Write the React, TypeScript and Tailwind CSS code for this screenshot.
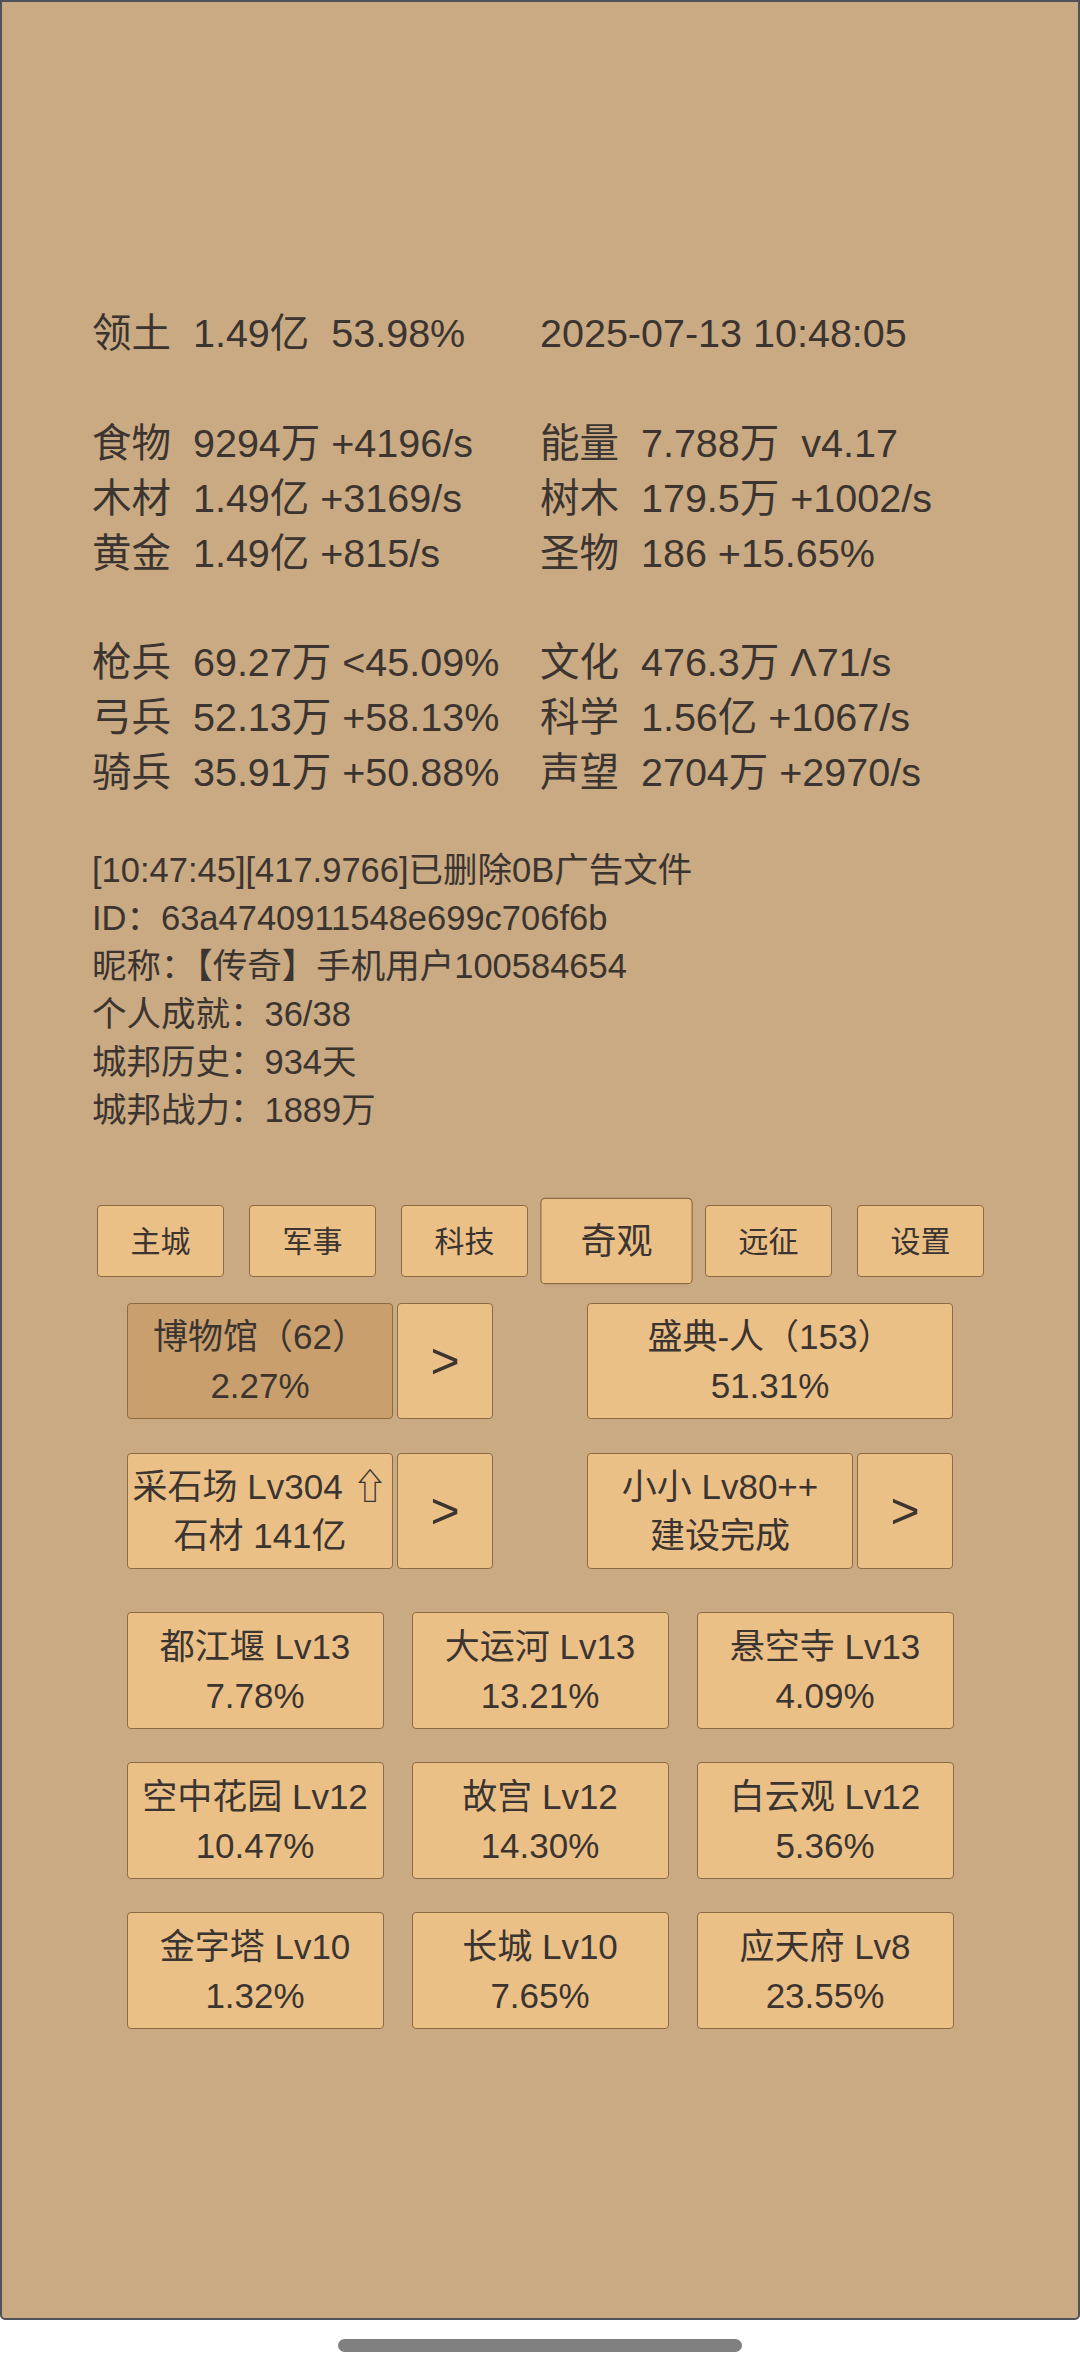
import React from 'react';

const stats: [string, string][] = [
  ['领土  1.49亿  53.98%', '2025-07-13 10:48:05'],
  ['', ''],
  ['食物  9294万 +4196/s', '能量  7.788万  v4.17'],
  ['木材  1.49亿 +3169/s', '树木  179.5万 +1002/s'],
  ['黄金  1.49亿 +815/s', '圣物  186 +15.65%'],
  ['', ''],
  ['枪兵  69.27万 <45.09%', '文化  476.3万 Λ71/s'],
  ['弓兵  52.13万 +58.13%', '科学  1.56亿 +1067/s'],
  ['骑兵  35.91万 +50.88%', '声望  2704万 +2970/s'],
];

const logLines = [
  '[10:47:45][417.9766]已删除0B广告文件',
  'ID：63a4740911548e699c706f6b',
  '昵称：【传奇】手机用户100584654',
  '个人成就：36/38',
  '城邦历史：934天',
  '城邦战力：1889万',
];

const tabs = ['主城', '军事', '科技', '奇观', '远征', '设置'];

const wonders = [
  ['都江堰 Lv13', '7.78%'],
  ['大运河 Lv13', '13.21%'],
  ['悬空寺 Lv13', '4.09%'],
  ['空中花园 Lv12', '10.47%'],
  ['故宫 Lv12', '14.30%'],
  ['白云观 Lv12', '5.36%'],
  ['金字塔 Lv10', '1.32%'],
  ['长城 Lv10', '7.65%'],
  ['应天府 Lv8', '23.55%'],
];

function TwoLine({ top, bottom, dark = false, className = '' }: { top: string; bottom: string; dark?: boolean; className?: string }) {
  return (
    <div
      className={`flex flex-col items-center justify-center rounded-[4px] border border-[#8c6a44] text-[35px] leading-[49px] whitespace-pre ${
        dark ? 'bg-[#c99f6d]' : 'bg-[#eac087]'
      } ${className}`}
    >
      <div>{top}</div>
      <div>{bottom}</div>
    </div>
  );
}

function Arrow() {
  return (
    <div className="flex h-[116px] w-[96px] items-center justify-center rounded-[4px] border border-[#8c6a44] bg-[#eac087] text-[50px] leading-none">
      &gt;
    </div>
  );
}

export default function App() {
  return (
    <div className="min-h-screen bg-white font-['Liberation_Sans','Noto_Sans_CJK_SC',sans-serif] text-[#3b3430]">
      <div className="flex h-[2320px] flex-col rounded-b-[5px] border-2 border-[#50525a] bg-[#c9aa82]">
        {/* Resource stats */}
        <div className="grid grid-cols-[448px_448px] pl-[90px] pt-[304px] text-[39.5px] leading-[54.9px] whitespace-pre">
          {stats.map(([l, r], i) => (
            <React.Fragment key={i}>
              <div className="h-[54.9px]">{l}</div>
              <div className="h-[54.9px]">{r}</div>
            </React.Fragment>
          ))}
        </div>

        {/* Log / profile */}
        <div className="mt-[47px] pl-[90px] text-[34.5px] leading-[47.9px] whitespace-pre">
          {logLines.map((t) => (
            <div key={t}>{t}</div>
          ))}
        </div>

        {/* Tabs */}
        <div className="mt-[71px] flex justify-center gap-[25px] pl-[1px]">
          {tabs.map((t) => (
            <div
              key={t}
              className={`flex h-[72px] w-[127px] items-center justify-center rounded-[4px] border border-[#8c6a44] bg-[#eac087] text-[30px] ${
                t === '奇观' ? 'scale-[1.2]' : ''
              }`}
            >
              {t}
            </div>
          ))}
        </div>

        {/* Building rows */}
        <div className="mt-[26px] flex justify-center gap-[94px]">
          <div className="flex gap-[4px]">
            <TwoLine top="博物馆（62）" bottom="2.27%" dark className="h-[116px] w-[266px]" />
            <Arrow />
          </div>
          <TwoLine top="盛典-人（153）" bottom="51.31%" className="h-[116px] w-[366px]" />
        </div>

        <div className="mt-[34px] flex justify-center gap-[94px]">
          <div className="flex gap-[4px]">
            <TwoLine top="采石场 Lv304 ⇧" bottom="石材 141亿" className="h-[116px] w-[266px]" />
            <Arrow />
          </div>
          <div className="flex gap-[4px]">
            <TwoLine top="小小 Lv80++" bottom="建设完成" className="h-[116px] w-[266px]" />
            <Arrow />
          </div>
        </div>

        {/* Wonders */}
        <div className="mt-[43px] grid grid-cols-[257px_257px_257px] justify-center gap-x-[28px] gap-y-[33px]">
          {wonders.map(([a, b]) => (
            <TwoLine key={a} top={a} bottom={b} className="h-[117px]" />
          ))}
        </div>
      </div>

      {/* Gesture bar */}
      <div className="flex h-[56px] justify-center pt-[19px]">
        <div className="h-[13px] w-[404px] rounded-full bg-[#808080]" />
      </div>
    </div>
  );
}
